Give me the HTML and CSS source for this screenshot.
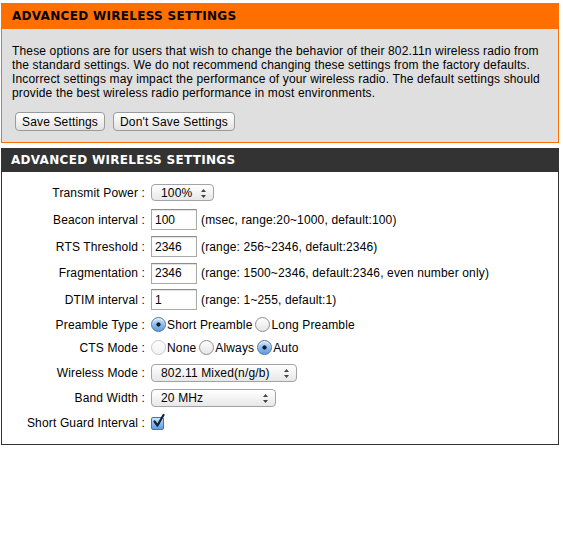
FILE: index.html
```html
<!DOCTYPE html>
<html lang="en">
<head>
    <meta charset="UTF-8">
    <title>Advanced Wireless Settings</title>
    <link rel="stylesheet" href="styles.css">
</head>
<body>

    <div class="box intro">
        <h2 class="box-title">ADVANCED WIRELESS SETTINGS</h2>
        <div class="box-body">
            <p>These options are for users that wish to change the behavior of their 802.11n wireless radio from
            the standard settings. We do not recommend changing these settings from the factory defaults.
            Incorrect settings may impact the performance of your wireless radio. The default settings should
            provide the best wireless radio performance in most environments.</p>
            <div class="actions">
                <button type="button" class="btn">Save Settings</button>
                <button type="button" class="btn">Don't Save Settings</button>
            </div>
        </div>
    </div>

    <div class="box settings">
        <h2 class="box-title">ADVANCED WIRELESS SETTINGS</h2>
        <div class="box-body form">
            <div class="row r27">
                <label class="label">Transmit Power :</label>
                <span class="popup w-power">
                    <select>
                        <option>100%</option>
                        <option>50%</option>
                        <option>25%</option>
                        <option>12.5%</option>
                    </select>
                    <svg class="arrows" width="5" height="9" viewBox="0 0 5 9"><path d="M2.5 0 L5 3 H0 Z M2.5 9 L5 6 H0 Z" fill="#444"/></svg>
                </span>
            </div>
            <div class="row r27">
                <label class="label">Beacon interval :</label>
                <input type="text" class="field" value="100">
                <span class="hint">(msec, range:20~1000, default:100)</span>
            </div>
            <div class="row r27">
                <label class="label">RTS Threshold :</label>
                <input type="text" class="field" value="2346">
                <span class="hint">(range: 256~2346, default:2346)</span>
            </div>
            <div class="row r26">
                <label class="label">Fragmentation :</label>
                <input type="text" class="field" value="2346">
                <span class="hint">(range: 1500~2346, default:2346, even number only)</span>
            </div>
            <div class="row r27">
                <label class="label">DTIM interval :</label>
                <input type="text" class="field" value="1">
                <span class="hint">(range: 1~255, default:1)</span>
            </div>
            <div class="row r23">
                <label class="label">Preamble Type :</label>
                <span class="choices">
                    <label><input type="radio" name="preamble" checked>Short Preamble</label>
                    <label><input type="radio" name="preamble">Long Preamble</label>
                </span>
            </div>
            <div class="row r23">
                <label class="label">CTS Mode :</label>
                <span class="choices">
                    <label><input type="radio" name="cts" disabled>None</label>
                    <label><input type="radio" name="cts">Always</label>
                    <label><input type="radio" name="cts" checked>Auto</label>
                </span>
            </div>
            <div class="row r27">
                <label class="label">Wireless Mode :</label>
                <span class="popup w-mode">
                    <select>
                        <option>802.11 Mixed(n/g/b)</option>
                        <option>802.11n only</option>
                        <option>802.11 Mixed(n/g)</option>
                    </select>
                    <svg class="arrows" width="5" height="9" viewBox="0 0 5 9"><path d="M2.5 0 L5 3 H0 Z M2.5 9 L5 6 H0 Z" fill="#444"/></svg>
                </span>
            </div>
            <div class="row r24">
                <label class="label">Band Width :</label>
                <span class="popup w-band">
                    <select>
                        <option>20 MHz</option>
                        <option>Auto 20/40 MHz</option>
                    </select>
                    <svg class="arrows" width="5" height="9" viewBox="0 0 5 9"><path d="M2.5 0 L5 3 H0 Z M2.5 9 L5 6 H0 Z" fill="#444"/></svg>
                </span>
            </div>
            <div class="row r26">
                <label class="label">Short Guard Interval :</label>
                <span class="check">
                    <input type="checkbox" checked>
                    <svg class="tick" width="13" height="14" viewBox="0 0 13 14"><path d="M2.5 7.5 L5.5 11.5 L11.5 1" fill="none" stroke="#10233f" stroke-width="2.2" stroke-linecap="round" stroke-linejoin="round"/></svg>
                </span>
            </div>
        </div>
    </div>

</body>
</html>
```

FILE: styles.css
```css
body {
    font-family: "Liberation Sans", Arial, sans-serif;
    font-size: 12px;
    letter-spacing: 0.15px;
    color: #000;
    background: #fff;
    margin: 3px 0 0 1px;
}

.box {
    width: 558px;
    box-sizing: border-box;
}

.box-title {
    margin: 0;
    padding: 0 10px;
    font-family: "DejaVu Sans", Verdana, sans-serif;
    font-size: 12px;
    font-weight: bold;
    letter-spacing: 0.3px;
    line-height: 24px;
}

/* orange info panel */
.intro {
    border: 1px solid #ff6f00;
    background: #dfdfdf;
}

.intro .box-title {
    background: #ff6f00;
    color: #000;
    line-height: 25px;
}

.intro .box-body {
    padding: 15px 10px 11px;
}

.intro p {
    margin: 0;
    line-height: 14px;
}

.actions {
    display: flex;
    gap: 8px;
    margin-top: 12px;
    padding-left: 3px;
}

.btn {
    font-family: "Liberation Sans", Arial, sans-serif;
    font-size: 12px;
    letter-spacing: 0.15px;
    height: 19px;
    padding: 0 6px;
    border: 1px solid #9a9a9a;
    border-radius: 4px;
    background: linear-gradient(#ffffff, #f1f1f1 50%, #e2e2e2);
    color: #000;
}

/* dark settings panel */
.settings {
    margin-top: 5px;
}

.settings .box-title {
    background: #333;
    color: #fff;
}

.form {
    border: 1px solid #333;
    border-top: none;
    padding: 7px 0 8px;
}

.row {
    display: flex;
    align-items: center;
}

.r23 { height: 23px; }
.r24 { height: 24px; }
.r26 { height: 26px; }
.r27 { height: 27px; }

.label {
    width: 143px;
    text-align: right;
    margin-right: 6px;
    flex-shrink: 0;
}

.field {
    width: 46px;
    height: 21px;
    box-sizing: border-box;
    margin: 0 4px 0 0;
    padding: 0 3px;
    font-family: "Liberation Sans", Arial, sans-serif;
    font-size: 12px;
    border: 1px solid #a9a9a9;
    border-top-color: #8c8c8c;
    box-shadow: inset 0 1px 1px rgba(0, 0, 0, 0.12);
}

.popup {
    position: relative;
    display: inline-block;
}

.popup select {
    appearance: none;
    -webkit-appearance: none;
    height: 18px;
    box-sizing: border-box;
    padding: 0 0 0 9px;
    font-family: "Liberation Sans", Arial, sans-serif;
    font-size: 12px;
    letter-spacing: 0.15px;
    color: #000;
    border: 1px solid #a3a3a3;
    border-radius: 4px;
    background: linear-gradient(#ffffff, #f3f3f3 50%, #e7e7e7);
}

.w-power select { width: 63px; height: 17px; }
.w-mode select { width: 146px; }
.w-band select { width: 125px; }

.popup .arrows {
    position: absolute;
    right: 8px;
    top: 50%;
    margin-top: -4px;
    pointer-events: none;
}

.choices {
    display: flex;
    align-items: center;
    gap: 3px;
}

.choices label {
    display: flex;
    align-items: center;
}

.choices input {
    appearance: none;
    -webkit-appearance: none;
    width: 15px;
    height: 15px;
    margin: 0 1px 0 0;
    border: 1px solid #8d8d8d;
    border-radius: 50%;
    background: linear-gradient(#fdfdfd, #e6e6e6);
    box-shadow: inset 0 1px 1px rgba(255, 255, 255, 0.8);
}

.choices input:checked {
    border-color: #50729a;
    background: radial-gradient(circle, #1a1a1a 0 1.8px, transparent 2.4px),
                linear-gradient(#d2e6fa, #8bbdf0 50%, #5c9de3);
}

.choices input:disabled {
    border-color: #c8c8c8;
    background: linear-gradient(#fefefe, #f2f2f2);
}

.check {
    position: relative;
    display: inline-block;
    width: 13px;
    height: 13px;
}

.check input {
    appearance: none;
    -webkit-appearance: none;
    display: block;
    width: 13px;
    height: 13px;
    margin: 0;
    border: 1px solid #50729a;
    border-radius: 2px;
    background: linear-gradient(#d2e6fa, #8bbdf0 50%, #5c9de3);
}

.check .tick {
    position: absolute;
    left: 1px;
    top: -3px;
    pointer-events: none;
}
```
